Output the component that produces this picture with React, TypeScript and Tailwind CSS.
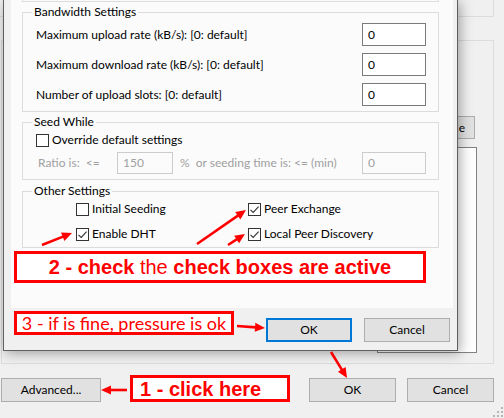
import React from "react";

const ui = "[font-family:Lato,'Noto_Sans',sans-serif] text-[12px] text-black";

function Check({ checked }: { checked?: boolean }) {
    return (
        <span className="w-[13px] h-[13px] border border-[#333333] bg-white flex items-center justify-center shrink-0">
            {checked && (
                <svg width="11" height="11" viewBox="0 0 11 11">
                    <path d="M1.5 5.8 L4.2 8.4 L9.6 2.6" stroke="#333333" strokeWidth="1.1" fill="none" />
                </svg>
            )}
        </span>
    );
}

function Field({ value, disabled, narrow, className = "" }: { value: string; disabled?: boolean; narrow?: boolean; className?: string }) {
    return (
        <div
            className={`border flex items-center pl-[5px] shrink-0 ${narrow ? "w-[56px]" : "w-[64px]"} ${
                disabled ? "border-[#cccccc] text-[#a0a0a0] h-[22px]" : "border-[#7a7a7a] bg-white h-[23px]"
            } ${className}`}
        >
            {value}
        </div>
    );
}

function Button({ label, focused, className = "" }: { label: string; focused?: boolean; className?: string }) {
    return (
        <div
            className={`h-[24px] flex items-center justify-center bg-[#e1e1e1] ${
                focused ? "border-2 border-[#0078d7]" : "border border-[#adadad]"
            } ${className}`}
        >
            {label}
        </div>
    );
}

function Group({ title, className = "", children }: { title: string; className?: string; children?: React.ReactNode }) {
    return (
        <fieldset className={`ml-[11px] w-[417px] border border-[#dcdcdc] ${className}`}>
            <legend className="ml-[9px] px-[2px] h-[16px] leading-[16px]">{title}</legend>
            {children}
        </fieldset>
    );
}

function Arrow({ x1, y1, x2, y2 }: { x1: number; y1: number; x2: number; y2: number }) {
    const dx = x2 - x1;
    const dy = y2 - y1;
    const len = Math.hypot(dx, dy);
    const ux = dx / len;
    const uy = dy / len;
    const head = 10;
    const half = 4.5;
    const bx = x2 - ux * head;
    const by = y2 - uy * head;
    const pts = `${x2},${y2} ${bx - uy * half},${by + ux * half} ${bx + uy * half},${by - ux * half}`;
    return (
        <g>
            <line x1={x1} y1={y1} x2={bx + ux} y2={by + uy} stroke="#ff0000" strokeWidth="2.6" />
            <polygon points={pts} fill="#ff0000" />
        </g>
    );
}

function AdvancedDialog() {
    return (
        <div className="absolute left-[3px] top-0 w-[455px] h-[351px] border-x border-b border-[#5f5f5f] bg-[#f0f0f0] shadow-[2px_2px_12px_rgba(0,0,0,0.35)] flex flex-col">
            <div className="ml-[7px] w-[442px] h-[308px] bg-[#fbfbfb] flex flex-col">
                <div className="ml-[11px] w-[417px] h-[2px] border-x border-b border-[#dcdcdc]" />

                <Group title="Bandwidth Settings" className="mt-[2px]">
                    <div className="flex flex-col gap-[7px] pl-[13px] pr-[12px] pt-[3px] pb-[5px]">
                        <div className="flex items-center justify-between">
                            <span>Maximum upload rate (kB/s): [0: default]</span>
                            <Field value="0" />
                        </div>
                        <div className="flex items-center justify-between">
                            <span>Maximum download rate (kB/s): [0: default]</span>
                            <Field value="0" />
                        </div>
                        <div className="flex items-center justify-between">
                            <span>Number of upload slots: [0: default]</span>
                            <Field value="0" />
                        </div>
                    </div>
                </Group>

                <Group title="Seed While" className="mt-[2px]">
                    <div className="pl-[13px] pr-[12px] pt-[2px] pb-[5px]">
                        <div className="flex items-center gap-[3px] h-[16px]">
                            <Check />
                            <span>Override default settings</span>
                        </div>
                        <div className="flex items-center mt-[4px] text-[#a0a0a0]">
                            <span className="ml-[2px] w-[79px]">Ratio is:&nbsp;&nbsp;&lt;=</span>
                            <Field value="150" disabled narrow />
                            <span className="ml-[7px]">%&nbsp;&nbsp;or seeding time is: &lt;= (min)</span>
                            <Field value="0" disabled className="ml-auto" />
                        </div>
                    </div>
                </Group>

                <Group title="Other Settings" className="mt-[3px]">
                    <div className="grid grid-cols-[172px_1fr] gap-y-[9px] pl-[53px] pt-[2px] pb-[5px]">
                        <div className="flex items-center gap-[3px] h-[16px]">
                            <Check />
                            <span>Initial Seeding</span>
                        </div>
                        <div className="flex items-center gap-[3px] h-[16px]">
                            <Check checked />
                            <span>Peer Exchange</span>
                        </div>
                        <div className="flex items-center gap-[3px] h-[16px]">
                            <Check checked />
                            <span>Enable DHT</span>
                        </div>
                        <div className="flex items-center gap-[3px] h-[16px]">
                            <Check checked />
                            <span>Local Peer Discovery</span>
                        </div>
                    </div>
                </Group>
            </div>

            <div className="mt-[10px] pr-[7px] flex justify-end gap-[12px]">
                <Button label="OK" focused className="w-[86px]" />
                <Button label="Cancel" className="w-[86px]" />
            </div>
        </div>
    );
}

export default function App() {
    return (
        <div className={`relative w-[504px] h-[418px] overflow-hidden bg-[#f0f0f0] flex flex-col ${ui}`}>
            {/* background window */}
            <div className="w-[494px] h-[17px] border-r border-b border-[#dcdcdc] shrink-0" />
            <div className="ml-[1px] mt-[23px] w-[493px] h-[324px] border border-[#dcdcdc] flex flex-col items-end shrink-0">
                <div className="mt-[75px] mr-[18px] w-[80px] h-[23px] border border-[#adadad] bg-[#e1e1e1] flex items-center justify-end pr-[9px]">
                    e
                </div>
                <div className="mt-[8px] mr-[16px] w-[100px] h-[206px] border border-[#828282] bg-white" />
            </div>
            <div className="mt-[14px] flex items-center">
                <Button label="Advanced..." className="ml-[1px] w-[100px]" />
                <Button label="OK" className="ml-auto w-[87px]" />
                <Button label="Cancel" className="ml-[11px] mr-[10px] w-[87px]" />
            </div>

            <svg className="absolute right-[1px] bottom-[1px]" width="10" height="10" viewBox="0 0 10 10">
                <g fill="#b5b5b5">
                    <rect x="8" y="0" width="2" height="2" />
                    <rect x="4" y="4" width="2" height="2" />
                    <rect x="8" y="4" width="2" height="2" />
                    <rect x="0" y="8" width="2" height="2" />
                    <rect x="4" y="8" width="2" height="2" />
                    <rect x="8" y="8" width="2" height="2" />
                </g>
            </svg>

            <AdvancedDialog />

            {/* annotations */}
            <div className="absolute left-[14px] top-[251px] w-[412px] h-[32px] border-[3px] border-[#ff0000] bg-white flex items-center justify-center [font-family:'Liberation_Sans',Arial,sans-serif] text-[20px] font-bold text-[#ff0000] whitespace-nowrap">
                2 - check&nbsp;<span className="font-normal">the</span>&nbsp;check boxes are active
            </div>
            <div className="absolute left-[14px] top-[311px] w-[220px] h-[24px] border-[3px] border-[#ff0000] bg-white flex items-center justify-center [font-family:Lato,sans-serif] text-[18px] text-[#ff0000] whitespace-nowrap">
                3 - if is fine, pressure is ok
            </div>
            <div className="absolute left-[130px] top-[375px] w-[160px] h-[27px] border-[3px] border-[#ff0000] bg-white flex items-center pl-[7px] [font-family:'Liberation_Sans',Arial,sans-serif] text-[20px] font-bold text-[#ff0000] whitespace-nowrap">
                1 - click here
            </div>

            <svg className="absolute left-0 top-0 pointer-events-none" width="504" height="418">
                <Arrow x1={42} y1={245} x2={72} y2={233} />
                <Arrow x1={197} y1={244} x2={246} y2={210} />
                <Arrow x1={228} y1={245} x2={245} y2={234} />
                <Arrow x1={237} y1={326} x2={265} y2={328} />
                <Arrow x1={331} y1={352} x2={347} y2={378} />
                <Arrow x1={127} y1={390} x2={101} y2={390} />
            </svg>
        </div>
    );
}
